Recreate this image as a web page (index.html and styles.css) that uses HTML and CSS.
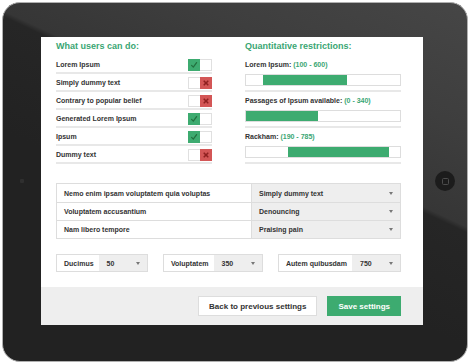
FILE: index.html
```html
<!DOCTYPE html>
<html lang="en">
<head>
<meta charset="utf-8">
<title>Settings</title>
<link rel="stylesheet" href="styles.css">
</head>
<body>
<div class="device">
  <div class="camera"></div>
  <div class="screen">
    <div class="content">
      <div class="top">
        <section class="col">
          <h2 class="title">What users can do:</h2>
          <ul class="perm-list">
            <li class="perm"><span>Lorem Ipsum</span><span class="toggle on"><span class="half"><svg viewBox="0 0 12 12" width="12" height="12"><path d="M3.6 6.4 L5.3 8.2 L8.6 3.6" /></svg></span><span class="half"></span></span></li>
            <li class="perm"><span>Simply dummy text</span><span class="toggle off"><span class="half"></span><span class="half"><svg viewBox="0 0 12 12" width="12" height="12"><path d="M4.2 4.2 L7.8 7.8 M7.8 4.2 L4.2 7.8" /></svg></span></span></li>
            <li class="perm"><span>Contrary to popular belief</span><span class="toggle off"><span class="half"></span><span class="half"><svg viewBox="0 0 12 12" width="12" height="12"><path d="M4.2 4.2 L7.8 7.8 M7.8 4.2 L4.2 7.8" /></svg></span></span></li>
            <li class="perm"><span>Generated Lorem Ipsum</span><span class="toggle on"><span class="half"><svg viewBox="0 0 12 12" width="12" height="12"><path d="M3.6 6.4 L5.3 8.2 L8.6 3.6" /></svg></span><span class="half"></span></span></li>
            <li class="perm"><span>Ipsum</span><span class="toggle on"><span class="half"><svg viewBox="0 0 12 12" width="12" height="12"><path d="M3.6 6.4 L5.3 8.2 L8.6 3.6" /></svg></span><span class="half"></span></span></li>
            <li class="perm"><span>Dummy text</span><span class="toggle off"><span class="half"></span><span class="half"><svg viewBox="0 0 12 12" width="12" height="12"><path d="M4.2 4.2 L7.8 7.8 M7.8 4.2 L4.2 7.8" /></svg></span></span></li>
          </ul>
        </section>
        <section class="col">
          <h2 class="title">Quantitative restrictions:</h2>
          <div class="range">
            <div class="range-label">Lorem Ipsum: <span class="range-val">(100 - 600)</span></div>
            <div class="bar"><div class="fill" style="margin-left:11%;width:54.5%"></div></div>
          </div>
          <div class="range">
            <div class="range-label">Passages of Ipsum available: <span class="range-val">(0 - 340)</span></div>
            <div class="bar"><div class="fill" style="margin-left:0;width:46.5%"></div></div>
          </div>
          <div class="range">
            <div class="range-label">Rackham: <span class="range-val">(190 - 785)</span></div>
            <div class="bar"><div class="fill" style="margin-left:27%;width:66%"></div></div>
          </div>
        </section>
      </div>

      <div class="opts">
        <div class="opt-row"><div class="opt-name">Nemo enim ipsam voluptatem quia voluptas</div><div class="opt-select"><span>Simply dummy text</span><i class="caret"></i></div></div>
        <div class="opt-row"><div class="opt-name">Voluptatem accusantium</div><div class="opt-select"><span>Denouncing</span><i class="caret"></i></div></div>
        <div class="opt-row"><div class="opt-name">Nam libero tempore</div><div class="opt-select"><span>Praising pain</span><i class="caret"></i></div></div>
      </div>

      <div class="fields">
        <div class="field"><span class="field-label">Ducimus</span><span class="field-select"><span>50</span><i class="caret"></i></span></div>
        <div class="field"><span class="field-label">Voluptatem</span><span class="field-select"><span>350</span><i class="caret"></i></span></div>
        <div class="field"><span class="field-label">Autem quibusdam</span><span class="field-select"><span>750</span><i class="caret"></i></span></div>
      </div>
    </div>
    <div class="footer">
      <button class="btn">Back to previous settings</button>
      <button class="btn primary">Save settings</button>
    </div>
  </div>
  <div class="home"><span class="home-square"></span></div>
</div>
</body>
</html>
```

FILE: styles.css
```css
* { box-sizing: border-box; }

html, body {
  margin: 0;
  padding: 0;
  background: #ffffff;
}

body {
  font-family: "Liberation Sans", Arial, sans-serif;
  color: #333333;
}

.device {
  margin: 2px;
  width: 466px;
  height: 360px;
  border: 1px solid #b0b0b0;
  border-radius: 18px;
  background:
    linear-gradient(205deg, #464646 0%, #3e3e3e 22%, #363636 39%, #262626 40%, rgba(34,34,34,0) 60%),
    #222222;
  display: grid;
  grid-template-columns: 38px 382px 1fr;
  grid-template-rows: 34px 288px 1fr;
}

.camera {
  grid-column: 1;
  grid-row: 2;
  align-self: center;
  justify-self: center;
  width: 4px;
  height: 4px;
  background: #2f2f2f;
  border-radius: 1px;
}

.screen {
  grid-column: 2;
  grid-row: 2;
  background: #ffffff;
  display: flex;
  flex-direction: column;
}

.home {
  grid-column: 3;
  grid-row: 2;
  align-self: center;
  justify-self: center;
  width: 20px;
  height: 20px;
  border-radius: 50%;
  background: #1c1c1c;
  display: flex;
  align-items: center;
  justify-content: center;
}

.home-square {
  width: 7px;
  height: 7px;
  border: 1px solid #4c4c4c;
  border-radius: 1.5px;
}

.content {
  flex: 1;
  padding: 4px 22px 0 15px;
}

.top {
  display: grid;
  grid-template-columns: 156px 156px;
  justify-content: space-between;
}

.title {
  margin: 0 0 4px;
  font-size: 9px;
  line-height: 11px;
  font-weight: bold;
  color: #3aa673;
}

.perm-list {
  list-style: none;
  margin: 0;
  padding: 0;
}

.perm {
  height: 18px;
  padding-top: 1px;
  border-bottom: 2px solid #e8e8e8;
  display: flex;
  align-items: center;
  justify-content: space-between;
  font-size: 7px;
  font-weight: bold;
  color: #333;
}

.toggle {
  display: flex;
  width: 24px;
  height: 12px;
  background: #ffffff;
  box-shadow: inset 0 0 0 1px #e0e0e0;
}

.half {
  width: 12px;
  height: 12px;
  display: flex;
}

.half svg {
  fill: none;
  stroke-linecap: round;
  stroke-linejoin: round;
}

.toggle.on .half:first-child {
  background: #3dab70;
}

.toggle.on svg {
  stroke: #22703f;
  stroke-width: 1.2;
}

.toggle.off .half:last-child {
  background: #d35656;
}

.toggle.off svg {
  stroke: #8f2020;
  stroke-width: 1.6;
}

.range {
  padding: 3px 0 4px;
  border-bottom: 2px solid #e8e8e8;
}

.range-label {
  font-size: 7px;
  line-height: 12px;
  font-weight: bold;
  color: #333;
}

.range-val {
  color: #3aa673;
}

.bar {
  margin-top: 3px;
  height: 12px;
  border: 1px solid #dddddd;
  background: #ffffff;
  display: flex;
}

.fill {
  height: 100%;
  background: #3dab70;
}

.opts {
  margin-top: 19px;
  border: 1px solid #dddddd;
}

.opt-row {
  display: grid;
  grid-template-columns: 1fr 149px;
  height: 18px;
  font-size: 7px;
  font-weight: bold;
  color: #333;
}

.opt-row + .opt-row {
  border-top: 1px solid #dddddd;
}

.opt-name {
  padding: 0 7px;
  display: flex;
  align-items: center;
}

.opt-select {
  background: #eeeeee;
  border-left: 1px solid #dddddd;
  padding: 0 7px 0 7px;
  display: flex;
  align-items: center;
  justify-content: space-between;
}

.caret {
  width: 0;
  height: 0;
  border-left: 2.5px solid transparent;
  border-right: 2.5px solid transparent;
  border-top: 3px solid #777777;
}

.fields {
  margin-top: 15px;
  display: flex;
  justify-content: space-between;
}

.field {
  display: flex;
  height: 18px;
  border: 1px solid #dddddd;
  font-size: 7px;
  font-weight: bold;
  color: #333;
}

.field-label {
  padding: 0 5px 0 7px;
  display: flex;
  align-items: center;
  background: #ffffff;
}

.field-select {
  width: 48px;
  background: #eeeeee;
  padding: 0 7px 0 8px;
  display: flex;
  align-items: center;
  justify-content: space-between;
}

.footer {
  height: 38px;
  background: #eeeeee;
  display: flex;
  align-items: center;
  justify-content: flex-end;
  gap: 10px;
  padding-right: 22px;
}

.btn {
  height: 20px;
  padding: 0 10px;
  font-family: "Liberation Sans", Arial, sans-serif;
  font-size: 8px;
  font-weight: bold;
  color: #333;
  background: #ffffff;
  border: 1px solid #dddddd;
  border-radius: 0;
}

.btn.primary {
  background: #3dab70;
  border-color: #3dab70;
  color: #ffffff;
}
```
